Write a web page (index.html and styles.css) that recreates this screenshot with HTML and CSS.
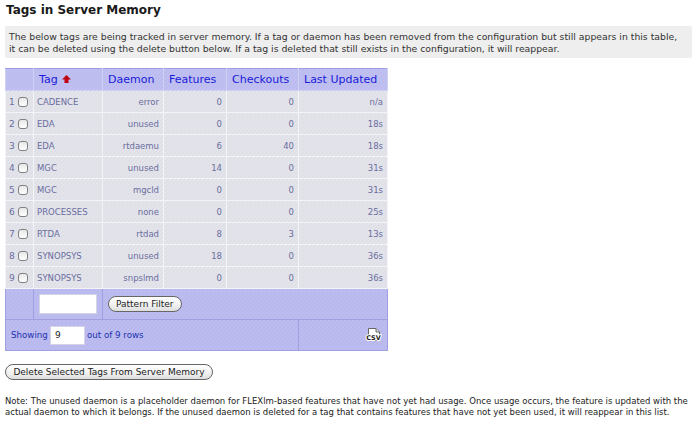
FILE: index.html
```html
<!DOCTYPE html>
<html lang="en">
<head>
<meta charset="utf-8">
<title>Tags in Server Memory</title>
<link rel="stylesheet" href="styles.css">
</head>
<body>
<h1 class="title">Tags in Server Memory</h1>
<p class="notice">The below tags are being tracked in server memory. If a tag or daemon has been removed from the configuration but still appears in this table,<br>it can be deleted using the delete button below. If a tag is deleted that still exists in the configuration, it will reappear.</p>
<table class="grid">
<colgroup><col class="c1"><col class="c2"><col class="c3"><col class="c4"><col class="c5"><col class="c6"></colgroup>
<thead>
<tr class="head"><th></th><th class="tag-head">Tag <svg class="arrow" width="9" height="8" viewBox="0 0 9 8"><path d="M4.5 0 9 4.5H6.5V8h-4V4.5H0z" fill="#c00012"/></svg></th><th>Daemon</th><th>Features</th><th>Checkouts</th><th>Last Updated</th></tr>
</thead>
<tbody>
<tr><td class="idx">1 <span class="check"></span></td><td class="name">CADENCE</td><td>error</td><td>0</td><td>0</td><td>n/a</td></tr>
<tr><td class="idx">2 <span class="check"></span></td><td class="name">EDA</td><td>unused</td><td>0</td><td>0</td><td>18s</td></tr>
<tr><td class="idx">3 <span class="check"></span></td><td class="name">EDA</td><td>rtdaemu</td><td>6</td><td>40</td><td>18s</td></tr>
<tr><td class="idx">4 <span class="check"></span></td><td class="name">MGC</td><td>unused</td><td>14</td><td>0</td><td>31s</td></tr>
<tr><td class="idx">5 <span class="check"></span></td><td class="name">MGC</td><td>mgcld</td><td>0</td><td>0</td><td>31s</td></tr>
<tr><td class="idx">6 <span class="check"></span></td><td class="name">PROCESSES</td><td>none</td><td>0</td><td>0</td><td>25s</td></tr>
<tr><td class="idx">7 <span class="check"></span></td><td class="name">RTDA</td><td>rtdad</td><td>8</td><td>3</td><td>13s</td></tr>
<tr><td class="idx">8 <span class="check"></span></td><td class="name">SYNOPSYS</td><td>unused</td><td>18</td><td>0</td><td>36s</td></tr>
<tr><td class="idx">9 <span class="check"></span></td><td class="name">SYNOPSYS</td><td>snpslmd</td><td>0</td><td>0</td><td>36s</td></tr>
</tbody>
<tfoot>
<tr class="filter"><td></td><td><span class="field field-filter"></span></td><td colspan="4"><button class="pill" type="button">Pattern Filter</button></td></tr>
<tr class="foot"><td colspan="5"><span class="foot-row">Showing <span class="field field-rows">9</span> out of 9 rows</span></td><td class="csv-cell"><svg class="csv" width="17" height="15" viewBox="0 0 17 15"><path d="M3.5 .5H11L14.5 4V12.5H3.5z" fill="#fff" stroke="#666"/><path d="M11 .5V4H14.5" fill="#ddd" stroke="#666"/><text x="8.5" y="12" text-anchor="middle" class="csv-text">CSV</text></svg></td></tr>
</tfoot>
</table>
<button class="pill pill-delete" type="button">Delete Selected Tags From Server Memory</button>
<p class="note">Note: The unused daemon is a placeholder daemon for FLEXlm-based features that have not yet had usage. Once usage occurs, the feature is updated with the<br>actual daemon to which it belongs. If the unused daemon is deleted for a tag that contains features that have not yet been used, it will reappear in this list.</p>
</body>
</html>
```
FILE: styles.css
```css
* { box-sizing: border-box; }
html, body { margin: 0; background: #fff; }
body {
  width: 700px;
  height: 426px;
  overflow: hidden;
  padding: 3px 8px 0 5px;
  font-family: "DejaVu Sans", Verdana, sans-serif;
  font-size: 9px;
  color: #222;
}
.title { margin: 0 0 0 1px; font-size: 12px; line-height: 15px; font-weight: bold; color: #1a1a1a; }
.notice {
  margin: 8px 0 10px;
  width: 687px;
  height: 32px;
  padding: 5px 4px 0;
  background: #eeeeee;
  border-radius: 2px;
  font-size: 9.3px;
  line-height: 12px;
  white-space: nowrap;
  color: #333;
}
.grid {
  width: 382px;
  table-layout: fixed;
  border-collapse: collapse;
  color: #6a6e9e;
}
.c1 { width: 28px; } .c2 { width: 69px; } .c3 { width: 61px; }
.c4 { width: 63px; } .c5 { width: 72px; } .c6 { width: 89px; }
.grid th, .grid td { padding: 0 4px; border: 1px solid #f4f4f8; }
.head th {
  height: 22px;
  background: repeating-linear-gradient(135deg, #b8b8ee 0 1.414px, #c4c4f2 1.414px 2.828px);
  border: 1px solid #d0d0f2;
  border-top-color: #9c9ce0;
  color: #1a1ad8;
  font-size: 11px;
  font-weight: normal;
  text-align: left;
  padding-left: 5px;
}
.tag-head { padding-left: 5px !important; }
.arrow { margin-left: 1px; }
tbody tr { height: 22px; }
tbody td {
  background: repeating-linear-gradient(135deg, #dddde6 0 1.414px, #e6e6ec 1.414px 2.828px);
  text-align: right;
  font-size: 8.5px;
}
.grid td.idx { text-align: left; padding: 0 0 0 3px; white-space: nowrap; font-size: 9px; }
.grid td.name { text-align: left; padding-left: 3px; }
.check {
  display: inline-block;
  width: 10px;
  height: 10px;
  vertical-align: -2px;
  background: linear-gradient(#e8e8e8, #fff);
  border: 1px solid #808080;
  border-radius: 3px;
}
.filter td, .foot td {
  background: repeating-linear-gradient(135deg, #b4b4ec 0 1.414px, #c0c0f0 1.414px 2.828px);
  border-color: #a0a0e0;
  text-align: left;
  color: #2232b0;
}
.filter td { height: 31px; padding: 0 0 0 5px; }
.foot td { height: 31px; padding-left: 5px; font-size: 8.7px; }
.foot-row { display: flex; align-items: center; gap: 2px; }
.field { display: inline-block; background: #fff; border: 1px solid #d4d4e4; color: #222; }
.field-filter { width: 58px; height: 20px; display: block; }
.field-rows { width: 35px; height: 19px; padding: 3px 0 0 4px; font-size: 9px; }
.csv-cell { text-align: right !important; padding-right: 5px !important; }
.csv { display: block; margin-left: auto; }
.csv-text { font-size: 6.5px; font-weight: bold; fill: #222; stroke: #fff; stroke-width: 2px; paint-order: stroke; }
.pill {
  height: 16px;
  padding: 0 7px;
  font-family: inherit;
  font-size: 9px;
  color: #222;
  background: linear-gradient(#fff, #f0f0f0 60%, #ddd);
  border: 1px solid #666;
  border-radius: 8px;
}
.pill-delete { display: block; margin: 13px 0 0 0; width: 208px; }
.note { margin: 16px 0 0; font-size: 8.5px; line-height: 11px; color: #222; white-space: nowrap; }
```
